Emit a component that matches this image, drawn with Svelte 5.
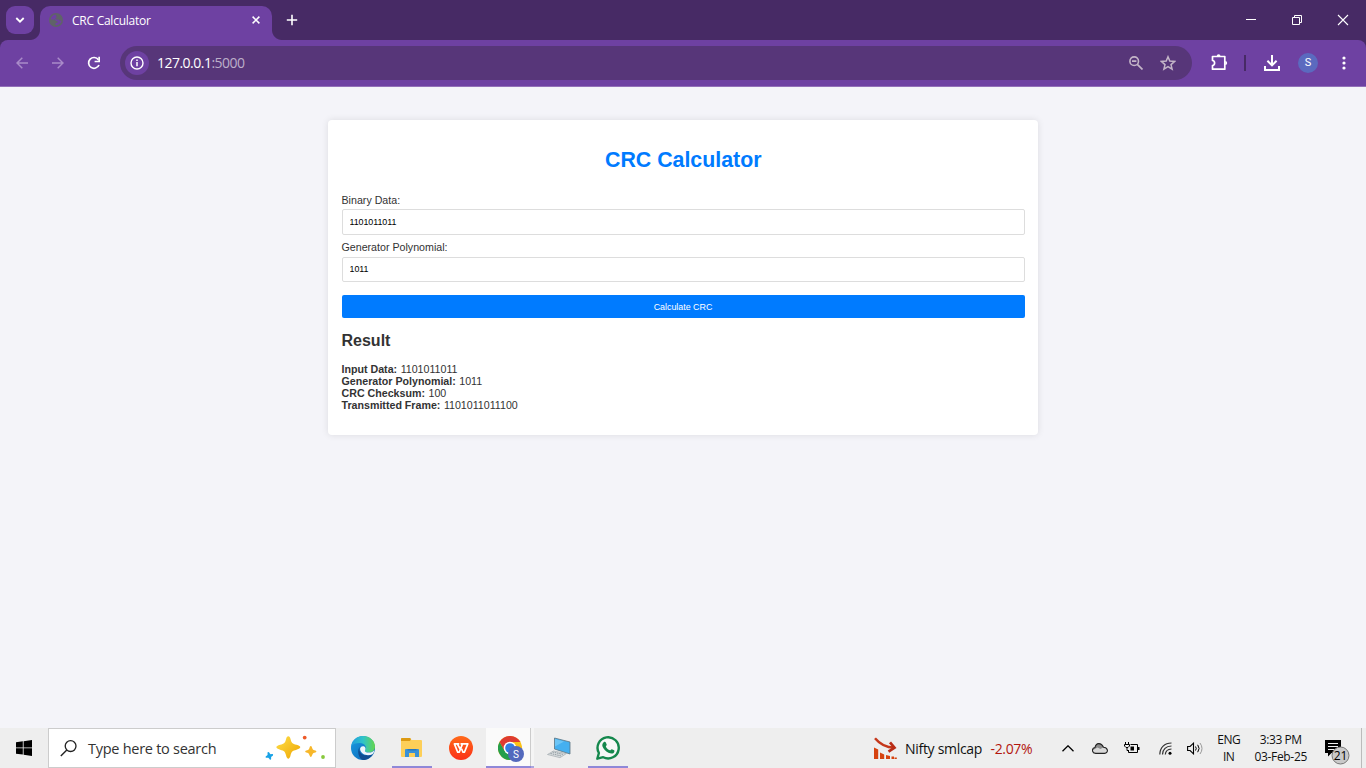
<script>
  const fields = [
    { id: 'data', label: 'Binary Data:', value: '1101011011' },
    { id: 'poly', label: 'Generator Polynomial:', value: '1011' }
  ];
  const results = [
    ['Input Data:', '1101011011'],
    ['Generator Polynomial:', '1011'],
    ['CRC Checksum:', '100'],
    ['Transmitted Frame:', '1101011011100']
  ];
</script>

<div class="screen">
  <header class="tabstrip">
    <button class="tabsearch" aria-label="Search tabs">
      <svg width="10" height="6" viewBox="0 0 10 6"><path d="M1.3 1 5 4.7 8.7 1" fill="none" stroke="#fff" stroke-width="1.8" /></svg>
    </button>
    <div class="tab">
      <svg class="globe" width="14" height="14" viewBox="0 0 14 14"><circle cx="7" cy="7" r="7" fill="#5f6368" /><path d="M6.5 1.600C4 1.800 1.900 4 1.600 6.500h3.200c1.200 0 1.900.6 2 1.600l1.600.2.3 1.300-2 .5-.3 2c3.200.5 5.900-1.700 6.100-4.500-1 .5-2.200.3-2.600-.8L8 6.600l-1.500-.4L6.300 5l1.500-.6-.6-1.500z" fill="#6e41a2" /></svg>
      <span class="tabtitle">CRC Calculator</span>
      <svg class="x" width="8" height="8" viewBox="0 0 8 8"><path d="m.6.6 6.800 6.800M7.400.6.6 7.400" stroke="#fff" stroke-width="1.500" /></svg>
    </div>
    <svg class="plus" width="12" height="12" viewBox="0 0 12 12"><path d="M6 .8v10.400M.8 6h10.400" stroke="#fff" stroke-width="1.600" /></svg>
    <div class="winbtns">
      <svg width="46" height="40" viewBox="0 0 46 40"><path d="M18 19.500h10" stroke="#fff" /></svg>
      <svg width="46" height="40" viewBox="0 0 46 40"><path d="M18.500 17.500h7v7h-7zM20.500 17.500v-2h7v7h-2" fill="none" stroke="#fff" /></svg>
      <svg width="46" height="40" viewBox="0 0 46 40"><path d="m18 15 10 10M28 15 18 25" stroke="#fff" stroke-width="1.100" /></svg>
    </div>
  </header>

  <nav class="toolbar">
    <svg class="back" width="12" height="12" viewBox="0 0 12 12"><path d="M12 6H1M6.300.7 1 6l5.300 5.300" fill="none" stroke="#a98bc9" stroke-width="1.500" /></svg>
    <svg class="fwd" width="12" height="12" viewBox="0 0 12 12"><path d="M0 6h11M5.700.7 11 6l-5.300 5.300" fill="none" stroke="#a98bc9" stroke-width="1.500" /></svg>
    <svg class="reload" width="14" height="14" viewBox="0 0 14 14"><path d="M12 9A5.400 5.400 0 1 1 11.400 3.700" fill="none" stroke="#fff" stroke-width="1.700" /><path d="M13 .8v5.500H7.600V4.700h3.700V.8z" fill="#fff" /></svg>
    <div class="omnibox">
      <span class="info"><svg width="14" height="14" viewBox="0 0 14 14"><circle cx="7" cy="7" r="6" fill="none" stroke="#fff" stroke-width="1.400" /><path d="M7 6v4.300M7 3.500v1.500" stroke="#fff" stroke-width="1.500" /></svg></span>
      <span class="url"><b>127.0.0.1</b><i>:5000</i></span>
      <svg class="mag" width="14" height="14" viewBox="0 0 14 14"><circle cx="5.200" cy="5.200" r="4.300" fill="none" stroke="#c4b5c8" stroke-width="1.600" /><path d="M3 5.200h4.400M8.300 8.300l5.200 5.200" stroke="#c4b5c8" stroke-width="1.700" /></svg>
      <svg width="16" height="16" viewBox="0 0 16 16"><path d="m8 1.800 1.800 4.300 4.700.4L11 9.600l1.100 4.600L8 11.700l-4.100 2.500L5 9.600 1.500 6.500l4.700-.4z" fill="none" stroke="#c4b5c8" stroke-width="1.500" /></svg>
    </div>
    <svg class="puzzle" width="17" height="17" viewBox="0 0 17 17"><path d="M1.500 2.500h12.300v12.700H1.500v-3.700c2.800-.3 2.800-4.700 0-5z" fill="none" stroke="#fff" stroke-width="1.700" stroke-linejoin="round" /><path d="M5.700 2.200a1.900 1.900 0 0 1 3.800 0zM14.200 6.900a2 2 0 0 1 0 4z" fill="#fff" /></svg>
    <span class="divider"></span>
    <svg class="download" width="16" height="16" viewBox="0 0 16 16"><path d="M8 0v10M3.400 5.800 8 10.400l4.600-4.600M1 11v4h14v-4" fill="none" stroke="#fff" stroke-width="2" /></svg>
    <span class="avatar">S</span>
    <svg class="dots" width="4" height="14" viewBox="0 0 4 14"><g fill="#fff"><circle cx="2" cy="2" r="1.600" /><circle cx="2" cy="7" r="1.600" /><circle cx="2" cy="12" r="1.600" /></g></svg>
  </nav>

  <main>
    <section class="card">
      <h1>CRC Calculator</h1>
      <form>
        {#each fields as f}
          <label for={f.id}>{f.label}</label>
          <input id={f.id} type="text" value={f.value} />
        {/each}
        <button type="button">Calculate CRC</button>
      </form>
      <h2>Result</h2>
      <div class="results">
        {#each results as [name, value]}
          <p><strong>{name}</strong> <span>{value}</span></p>
        {/each}
      </div>
    </section>
  </main>

  <footer class="taskbar">
    <div class="start"><svg width="16" height="16" viewBox="0 0 16 16"><path d="M0 2.200 6.800 1.300v6.200H0zM7.600 1.200 16 0v7.500H7.600zM0 8.300h6.800v6.300L0 13.700zM7.600 8.300H16V16l-8.400-1.200z" /></svg></div>
    <div class="search">
      <svg width="17" height="17" viewBox="0 0 17 17"><circle cx="10.600" cy="6.100" r="5.400" fill="none" stroke="#222" stroke-width="1.300" /><path d="M6.800 10 .8 16" stroke="#222" stroke-width="1.400" /></svg>
      <span>Type here to search</span>
      <svg class="sparkles" width="62" height="26" viewBox="0 0 62 26">
        <defs><linearGradient id="gold" x2="1" y2="1"><stop stop-color="#ffe04a" /><stop offset="1" stop-color="#eda400" /></linearGradient></defs>
        <path d="M24.300 1.200c1.200 0 1.700.9 2.200 2.700 1 3.900 1.800 4.900 6 5.900 5 1.300 5 3.600 0 4.900-4.200 1-5 2-6 5.900-.9 4.200-3.500 4.200-4.400 0-1-3.900-1.800-4.900-6-5.900-5-1.300-5-3.600 0-4.900 4.200-1 5-2 6-5.900.5-1.800 1-2.700 2.200-2.700z" fill="url(#gold)" />
        <path d="M46.800 11c.8 0 1 .8 1.400 2 .5 1.500.8 1.800 2.300 2.300 2.600.8 2.600 1.700 0 2.500-1.500.5-1.800.8-2.300 2.300-.8 2.500-2 2.500-2.800 0-.5-1.500-.8-1.800-2.300-2.300-2.600-.8-2.600-1.700 0-2.500 1.500-.5 1.800-.8 2.300-2.300.4-1.200.6-2 1.400-2z" fill="#f7b72a" />
        <path d="M4 17c1.300-.3 1.500 1.500 2.300 2s2.500-.4 2.800.7-1.500 1.500-1.900 2.300.5 2.400-.6 2.700-1.500-1.500-2.300-1.900-2.400.5-2.700-.6 1.500-1.500 1.900-2.300-.5-2.600.5-2.900z" fill="#18a2e6" />
        <circle cx="40.700" cy="2.600" r="1.900" fill="#ed5a29" /><circle cx="59" cy="22" r="1.900" fill="#87c83c" />
      </svg>
    </div>
    <div class="apps">
      <div class="app">
        <svg width="24" height="24" viewBox="0 0 24 24"><defs><linearGradient id="edgeTop" x1="0" x2="1"><stop stop-color="#229dde" /><stop offset=".5" stop-color="#30c4c8" /><stop offset="1" stop-color="#65d64b" /></linearGradient><linearGradient id="edgeLow" x1="0" x2="1" y2="1"><stop stop-color="#1b9de2" /><stop offset="1" stop-color="#0b63b5" /></linearGradient></defs>
          <circle cx="12" cy="12" r="12" fill="url(#edgeLow)" /><path d="M.2 10C1.300 4 6.100 0 12 0c7 0 12 5 12 10.500 0 3.500-2.600 5.900-5.900 5.900-3 0-4.700-1-4.200-2 2.600-3-.2-7.400-5-7.400C5 7 1.500 8.300.2 10z" fill="url(#edgeTop)" /><path d="M8.900 11C7 15 10.400 20 16.400 19.300c2.400-.2 4.400-1.300 5.800-1.800C20 21.300 16.400 24 12 24 7.200 22.500 5.700 14 8.900 11z" fill="#104e91" /><path d="M14.100 14.200c-.8 1.400 1 2.300 4 2.300 2.100 0 4-.9 5.100-2.300 0 2-1 3.300-1.700 4-5.300 2.500-11.100.1-12.300-4.200-.5-2 .7-3.800 2.800-3.800 2 0 3.200 2 2.100 4z" fill="#eef6fa" /></svg>
      </div>
      <div class="app open">
        <svg width="22" height="20" viewBox="0 0 22 20"><path d="M0 1q0-1 1-1h8l1.500 2H20q1 0 1 1v15q0 1-1 1H1q-1 0-1-1z" fill="#fdcf58" /><path d="M0 1q0-1 1-1h8l1 1-1 2H0z" fill="#dc9a12" /><path d="M4 19v-7q0-1 1-1h12q1 0 1 1v7h-4v-4H8v4z" fill="#3a91d7" /><path d="M6.500 11h9v1.500h-9z" fill="#2678bd" /></svg>
      </div>
      <div class="app">
        <svg width="24" height="24" viewBox="0 0 24 24"><defs><linearGradient id="wps" x2="0" y2="1"><stop stop-color="#ff6a1a" /><stop offset="1" stop-color="#fb3018" /></linearGradient></defs><circle cx="12" cy="12" r="12" fill="url(#wps)" /><path d="M10.300 7.900H5.400l3.300 8.300h1.500l3.300-8.300M8.400 8l3.300 6M12.600 12.800l1.400 3.400h1.400l3.400-8.300h-7.300" fill="none" stroke="#fff" stroke-width="1.700" stroke-linejoin="round" /></svg>
      </div>
      <div class="app active">
        <svg width="27" height="27" viewBox="0 0 27 27"><circle cx="12" cy="12" r="12" fill="#fbc116" /><path d="M1.600 6A12 12 0 0 0 12 24l5.200-9L12 12 6.800 15z" fill="#259f4b" /><path d="M12 6h10.400A12 12 0 0 0 1.600 6l5.200 9z" fill="#de3b31" /><circle cx="12" cy="12" r="6.300" fill="#fff" /><circle cx="12" cy="12" r="4.800" fill="#327ee3" /><circle cx="18" cy="18" r="8" fill="#5369bd" /><text class="badge" x="18" y="21.700" font-size="10" text-anchor="middle" fill="#fff">S</text></svg>
      </div>
      <div class="app">
        <svg width="24" height="22" viewBox="0 0 24 22"><path d="m7.500 1 15.500 4v12L7.500 12z" fill="#45b0f0" stroke="#5b7583" stroke-width=".8" /><path d="m8 2 9 2.500-9 5z" fill="#6cc5f6" /><path d="m6.500 14 13 2.500-6.500 4.200L.5 17.500z" fill="#d8dcde" stroke="#98a2a7" stroke-width=".6" /><path d="m5.500 15 11 2.500M3.500 16.500l10.500 2.400" stroke="#929da3" stroke-dasharray="1.500 .8" /></svg>
      </div>
      <div class="app open">
        <svg width="24" height="24" viewBox="0 0 24 24"><path d="M1.300 22.700 2.900 17A10.600 10.600 0 1 1 7.200 21.200z" fill="#f7f8f7" stroke="#15884d" stroke-width="2.400" stroke-linejoin="round" /><path d="M7.700 6.200c.9-.8 1.800-.5 2.100.3l.9 2.100c.3.8-1.100 1.500-.8 2.100 1 1.800 2.200 2.800 4 3.600.7.300 1.300-1.400 2-1.100l2.200 1.100c.8.4.2 1.900-.5 2.600-1 .9-2.900 1-5.200-.1-2.800-1.300-5-3.800-5.900-6.200-.6-1.700.2-3.600 1.200-4.400z" fill="#15884d" /></svg>
      </div>
    </div>

    <div class="stock">
      <svg width="23" height="23" viewBox="0 0 23 23"><path d="M1 1.200C5 6 11 10.500 20 10.500" fill="none" stroke="#c5381b" stroke-width="2.500" /><path d="m16 5.300 4.500 5.300-6 4" fill="none" stroke="#b92c17" stroke-width="2.700" /><path d="M0 10.500 4.200 12.500V22H0zM6 15.500l4.200 2V22H6zM12 18l4 1v3h-4zM17.500 19.500H20V22h-2.500zM20.500 20.500h2.300V22h-2.300z" fill="#d6420f" /></svg>
      <span class="name">Nifty smlcap</span><span class="pct">-2.07%</span>
    </div>
    <div class="tray">
      <svg width="12" height="7" viewBox="0 0 12 7"><path d="m.5 6.300L6 .8l5.500 5.500" fill="none" stroke="#000" stroke-width="1.300" /></svg>
      <svg class="cloud" width="16" height="11" viewBox="0 0 16 11"><path d="M3.700 10.400C-.5 10-.5 5 3 4.500 4-.4 9-.9 11.500 4.200c4.500.2 5.500 5.500 1 6.200z" fill="#d8d8d8" /><path d="M1 7C1 5.200 2 4.600 3 4.500 4-.4 9-.9 11.500 4.200L8.500 6 5.500 4.500z" fill="#8a8a8a" /><path d="M3.700 10.400C-.5 10-.5 5 3 4.500 4-.4 9-.9 11.500 4.200c4.500.2 5.500 5.500 1 6.200z" fill="none" stroke="#222" stroke-width="1.100" /></svg>
      <svg class="battery" width="16" height="12" viewBox="0 0 16 12"><path d="M6.500 2.500h7v8h-9V8M14.500 5v3" fill="none" stroke="#000" /><path d="M14 5h1.500v3H14zM6.500 4.500h3.500v4H6.500zM1 0h1v2H1zM4 0h1v2H4z" /><path d="M.5 2.500h5v1.500L4 5.500H2L.5 4zM3 5.500v3h1.500" fill="none" stroke="#000" /></svg>
      <svg class="wifi" width="13" height="13" viewBox="0 0 13 13"><g fill="none" stroke="#333" stroke-width="1.200"><path d="M.8 12.500C1 5.500 5.500 1 12.500 1" /><path d="M3.500 12.500C3.800 7.500 7 4.200 12.500 4" /><path d="M6.300 12.500C6.500 9.500 8.500 7.200 12.500 7" /></g><circle cx="11" cy="11.200" r="1.500" /></svg>
      <svg class="sound" width="17" height="13" viewBox="0 0 17 13"><path d="M.6 4.500h2.500L6.500 1.200v10.600L3.100 8.500H.6z" fill="none" stroke="#000" stroke-width="1.100" /><path d="M8.500 4.500q1.500 2 0 4M10.700 2.800q2.800 3.700 0 7.400" fill="none" stroke="#000" /><path d="M13 1q4 5.500 0 11" fill="none" stroke="#999" /></svg>
      <div class="two lang"><span>ENG</span><span>IN</span></div>
      <div class="two clock"><span>3:33 PM</span><span class="date">03-Feb-25</span></div>
      <svg class="notif" width="26" height="25" viewBox="0 0 26 25"><path d="M0 0h16v13H6.500L3 16.500V13H0z" /><path d="M3 3.500h10M3 6.500h10M3 9.500h7" stroke="#eee" /><circle cx="15.500" cy="15.500" r="8.500" fill="#c9c9c9" stroke="#777" /><text x="15.500" y="19.700" font-size="12" text-anchor="middle">21</text></svg>
    </div>
  </footer>
</div>

<style>
  :global(body) { margin: 0; overflow: hidden; }
  * { box-sizing: border-box; }
  svg { display: block; flex: none; }
  .screen { width: 1366px; height: 768px; display: flex; flex-direction: column; background: linear-gradient(#472a65 60px, #f4f4f9 60px); font-family: "Open Sans", sans-serif; white-space: nowrap; }
  .tabstrip { height: 40px; flex: none; display: flex; align-items: center; padding-left: 6px; }
  .tabsearch { position: relative; z-index: 1; width: 28px; height: 28px; border: 0; border-radius: 9px; background: #6e41a2; display: flex; align-items: center; justify-content: center; padding: 0; }
  .tab { position: relative; width: 232px; height: 34px; margin: 6px 0 0 6px; background: #6e41a2; border-radius: 10px 10px 0 0; display: flex; align-items: center; padding: 0 12px 6px 9px; color: #fff; }
  .tab::before, .tab::after { content: ""; position: absolute; bottom: 0; width: 10px; height: 10px; }
  .tab::before { left: -10px; background: radial-gradient(circle at 0 0, #472a65 9.500px, #6e41a2 10.500px); }
  .tab::after { right: -10px; background: radial-gradient(circle at 100% 0, #472a65 9.500px, #6e41a2 10.500px); }
  .tabtitle { margin-left: 9px; font-size: 12px; letter-spacing: -0.250px; line-height: 16px; padding-top: 1px; }
  .x { margin-left: auto; }
  .plus { margin-left: 14px; }
  .winbtns { display: flex; margin-left: auto; }
  .toolbar { height: 47px; flex: none; background: linear-gradient(#6e41a2 46px, #9270b8 46px); display: flex; align-items: center; padding: 0 20px 1px 16px; border-radius: 8px 8px 0 0; }
  .fwd { margin-left: 24px; }
  .reload { margin-left: 23px; }
  .omnibox { margin-left: 19px; width: 1072px; height: 34px; border-radius: 17px; background: #573679; display: flex; align-items: center; padding: 0 16px 0 5px; }
  .info { width: 24px; height: 24px; border-radius: 12px; background: #6e41a2; display: flex; align-items: center; justify-content: center; }
  .url { margin-left: 8px; font-size: 14px; letter-spacing: -0.520px; line-height: 20px; }
  .url b { font-weight: 400; color: #fff; }
  .url i { font-style: normal; color: #bcafc9; }
  .mag { margin: 0 17px 0 auto; }
  .puzzle { margin: -2px 0 0 19px; }
  .divider { width: 2px; height: 16px; background: #472a65; margin-left: 16px; }
  .download { margin-left: 18px; }
  .avatar { width: 20px; height: 20px; border-radius: 50%; background: #5b6abf; color: #fff; font: 11px/20px Roboto, sans-serif; text-align: center; margin-left: 18px; }
  .dots { margin-left: 24px; }

  main { flex: 1; padding-top: 33px; background: #f4f4f9; font-family: "Liberation Sans", Arial, sans-serif; color: #333; }
  .card { width: 710px; height: 315px; margin: 0 auto; background: #fff; border-radius: 4px; box-shadow: 0 0 7px rgba(0, 0, 0, .1); padding: 27px 13px 0 13.500px; }
  h1 { margin: 0; text-align: center; color: #007bff; font-size: 21.330px; line-height: 26px; }
  form { margin: 20px 0 0 .5px; display: flex; flex-direction: column; }
  label { font-size: 10.670px; line-height: 14px; margin: 0 0 2px -.5px; }
  input { height: 26px; border: 1px solid #ddd; border-radius: 2px; padding: 0 6.500px; font: 8.900px "Liberation Sans", Arial, sans-serif; letter-spacing: -0.060px; color: #000; background: #fff; outline: 0; margin-bottom: 5px; width: 683px; }
  input:last-of-type { height: 25px; margin: 1px 0 13px; padding-bottom: 1.500px; }
  form button { height: 23px; border: 0; border-radius: 2px; background: #007bff; color: #fff; font: 8.900px "Liberation Sans", Arial, sans-serif; padding: 0 1px 0 0; }
  h2 { margin: 13px 0 0; font-size: 16px; line-height: 20px; }
  .results { margin-top: 12px; }
  p { margin: 0; font-size: 10.670px; line-height: 12px; }
  p span { margin-left: .5px; }

  .taskbar { height: 40px; flex: none; background: #eee; display: flex; align-items: stretch; color: #111; }
  .start { width: 48px; display: flex; align-items: center; justify-content: center; }
  .search { width: 288px; border: 1px solid #ccc; background: #fff; display: flex; align-items: center; padding-left: 11px; font-size: 14.500px; letter-spacing: -0.270px; }
  .search span { margin-left: 11px; color: #333; }
  .sparkles { margin: 0 9px 0 auto; }
  .apps { display: flex; gap: 1px; margin-left: 3px; }
  .app { width: 48px; display: flex; align-items: center; justify-content: center; background-repeat: no-repeat; background-position: 50% 100%; }
  .open { background-image: linear-gradient(#8f88d8, #8f88d8); background-size: 40px 2px; }
  .active { background: linear-gradient(90deg, #8f88d8 45px, #aaa6df 45px) 0 100% / 48px 2px no-repeat, linear-gradient(90deg, #fafafa 44px, #ccc 44px, #ccc 45px, #f5f5f5 45px); padding: 3px 0 0 2px; }
  .stock { margin-left: 242px; display: flex; align-items: center; font-size: 14px; }
  .name { margin-left: 8px; letter-spacing: -0.300px; }
  .pct { color: #b3160e; margin-left: 8.500px; letter-spacing: -0.350px; }
  .tray { flex: 1; display: flex; align-items: center; border-right: 1px solid #bbb; margin-right: 4px; padding-left: 29.500px; }
  .cloud { margin-left: 18px; }
  .battery { margin-left: 16px; }
  .wifi { margin-left: 19px; }
  .sound { margin-left: 15px; }
  .two { display: flex; flex-direction: column; align-items: center; font-size: 12px; line-height: 17px; letter-spacing: -0.450px; padding-bottom: 1px; }
  .lang { width: 26px; margin-left: 12px; }
  .clock { width: 56px; margin-left: 11px; }
  .date { letter-spacing: -0.330px; }
  .notif { margin: 8px 0 0 16px; }
  text { font-family: "Open Sans", sans-serif; }
  .badge { font-family: Roboto, sans-serif; }
</style>
